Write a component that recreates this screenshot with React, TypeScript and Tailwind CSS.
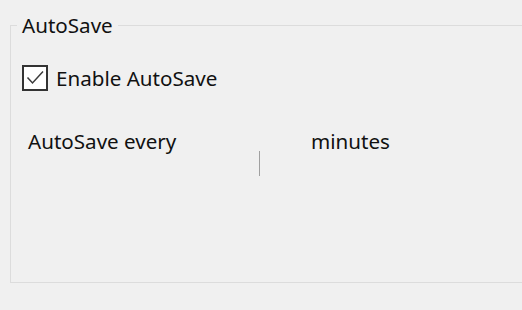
export default function App() {
  return (
    <div className="w-[522px] h-[310px] overflow-hidden bg-[#f0f0f0] pt-[25px] pl-[10px] font-['Noto_Sans',sans-serif] text-[20.6px] leading-[28px] text-[#111111]">
      {/* group box */}
      <div className="relative w-[540px] h-[258px] border border-[#dcdcdc]">
        <span className="absolute left-[6px] top-[-15px] px-[5px] bg-[#f0f0f0]">AutoSave</span>

        <div className="mt-[38px] ml-[11px] flex items-center gap-[8px]">
          <div className="w-[26px] h-[26px] border-2 border-[#333333] bg-white flex items-center justify-center">
            <svg width="22" height="22" viewBox="0 0 22 22" fill="none">
              <path d="M3.5 10.5 L8.5 16 L19 4.5" stroke="#3a3a3a" strokeWidth="1.5" />
            </svg>
          </div>
          <span>Enable AutoSave</span>
        </div>

        <div className="mt-[35px] pl-[17px] flex">
          <span className="w-[231px]">AutoSave every</span>
          <div className="w-[52px]">
            <div className="mt-[24px] w-px h-[25px] bg-[#a0a0a0]" />
          </div>
          <span>minutes</span>
        </div>
      </div>
    </div>
  )
}
